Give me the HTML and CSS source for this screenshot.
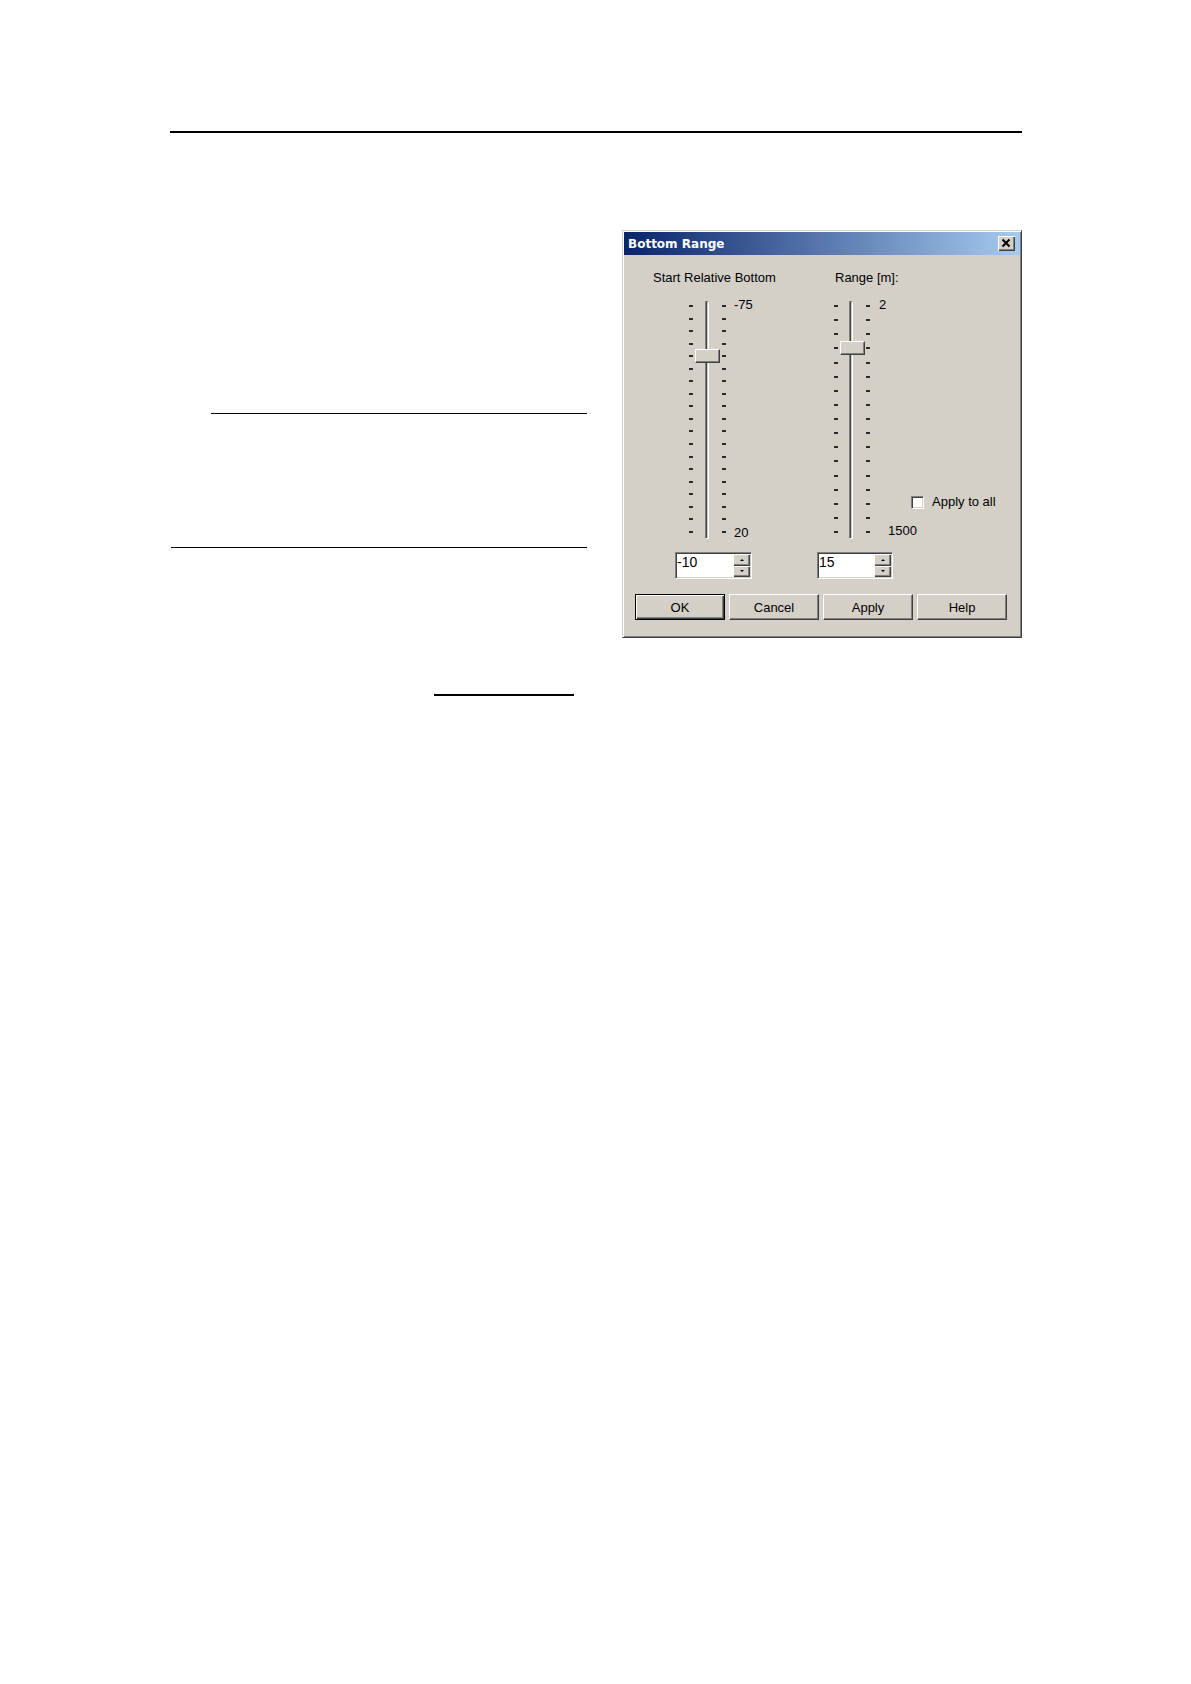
FILE: index.html
```html
<!DOCTYPE html>
<html lang="en">
<head>
<meta charset="utf-8">
<title>Bottom Range</title>
<link rel="stylesheet" href="styles.css">
</head>
<body>
<div class="page">
  <div class="rule-top"></div>
  <div class="content">
    <div class="text-col">
      <div class="rule-a"></div>
      <div class="rule-b"></div>
      <div class="rule-link"></div>
    </div>
    <div class="dialog">
      <div class="titlebar">
        <span class="title">Bottom Range</span>
        <button class="close" type="button" aria-label="Close">
          <svg width="17" height="15" viewBox="0 0 17 15"><path d="M4.5 3.5 L11.5 10.5 M11.5 3.5 L4.5 10.5" stroke="#000" stroke-width="2" fill="none"/></svg>
        </button>
      </div>
      <div class="client">
        <div class="controls">
          <div class="group group-start">
            <div class="hdr">Start Relative Bottom</div>
            <div class="slider slider-start">
              <div class="ticks"><i></i><i></i><i></i><i></i><i></i><i></i><i></i><i></i><i></i><i></i><i></i><i></i><i></i><i></i><i></i><i></i><i></i><i></i><i></i></div>
              <div class="track"><div class="thumb thumb-start"></div></div>
              <div class="ticks"><i></i><i></i><i></i><i></i><i></i><i></i><i></i><i></i><i></i><i></i><i></i><i></i><i></i><i></i><i></i><i></i><i></i><i></i><i></i></div>
              <div class="scale"><span>-75</span><span>20</span></div>
            </div>
            <div class="spin">
              <span class="value">-10</span>
              <span class="arrows"><span class="up"></span><span class="dn"></span></span>
            </div>
          </div>
          <div class="group group-range">
            <div class="hdr">Range [m]:</div>
            <div class="slider slider-range">
              <div class="ticks"><i></i><i></i><i></i><i></i><i></i><i></i><i></i><i></i><i></i><i></i><i></i><i></i><i></i><i></i><i></i><i></i><i></i></div>
              <div class="track"><div class="thumb thumb-range"></div></div>
              <div class="ticks"><i></i><i></i><i></i><i></i><i></i><i></i><i></i><i></i><i></i><i></i><i></i><i></i><i></i><i></i><i></i><i></i><i></i></div>
              <div class="scale"><span>2</span><span class="far">1500</span></div>
            </div>
            <div class="spin">
              <span class="value">15</span>
              <span class="arrows"><span class="up"></span><span class="dn"></span></span>
            </div>
          </div>
          <label class="check"><span class="box"></span><span>Apply to all</span></label>
        </div>
        <div class="buttons">
          <button class="btn btn-default" type="button">OK</button>
          <button class="btn" type="button">Cancel</button>
          <button class="btn" type="button">Apply</button>
          <button class="btn" type="button">Help</button>
        </div>
      </div>
    </div>
  </div>
</div>
</body>
</html>
```

FILE: styles.css
```css
html, body {
  margin: 0;
  background: #fff;
}
body {
  font-family: "Liberation Sans", Arial, sans-serif;
  color: #000;
}
.page {
  width: 1191px;
  padding-top: 131px;
}
.rule-top {
  margin-left: 170px;
  width: 852px;
  height: 2px;
  background: #000;
}
.content {
  display: flex;
  align-items: flex-start;
  margin-top: 97px;
}
.text-col {
  display: flex;
  flex-direction: column;
  margin-left: 171px;
  width: 416px;
}
.rule-a {
  margin-top: 183px;
  margin-left: 40px;
  height: 1px;
  background: #000;
}
.rule-b {
  margin-top: 133px;
  height: 1px;
  background: #000;
}
.rule-link {
  margin-top: 146px;
  margin-left: 263px;
  width: 140px;
  height: 2px;
  background: #000;
}

/* dialog window */
.dialog {
  margin-left: 35px;
  width: 400px;
  height: 408px;
  box-sizing: border-box;
  background: #d4d0c8;
  border: 1px solid;
  border-color: #d4d0c8 #404040 #404040 #d4d0c8;
  padding: 1px;
  box-shadow: inset 1px 1px #fff, inset -1px -1px #808080;
}
.titlebar {
  display: flex;
  align-items: center;
  height: 23px;
  background: linear-gradient(to right, #0a246a, #a6caf0);
}
.title {
  flex: 1;
  padding: 2px 0 0 4px;
  font-family: "DejaVu Sans", Verdana, sans-serif;
  font-weight: bold;
  font-size: 12px;
  line-height: 21px;
  color: #fff;
  white-space: nowrap;
}
.close {
  display: block;
  width: 17px;
  height: 15px;
  margin-right: 5px;
  padding: 0;
  border: 0;
  background: #d4d0c8;
  box-shadow: inset 1px 1px #fff, inset -1px -1px #404040, inset -2px -2px #808080;
}
.close svg {
  display: block;
}

.client {
  font-size: 13px;
}
.controls {
  display: flex;
  align-items: flex-start;
  padding: 15px 0 0 29px;
}
.group {
  display: flex;
  flex-direction: column;
  align-items: flex-start;
}
.group-start {
  width: 182px;
}
.group-range {
  width: 76px;
}
.hdr {
  height: 16px;
  line-height: 16px;
  white-space: nowrap;
}

/* trackbars */
.slider {
  display: flex;
  align-items: flex-start;
  height: 238px;
  margin-top: 15px;
}
.slider-start {
  margin-left: 36px;
}
.slider-range {
  margin-left: -1px;
}
.ticks {
  display: flex;
  flex-direction: column;
  justify-content: space-between;
  width: 4px;
  height: 228px;
  margin-top: 4px;
}
.ticks i {
  display: block;
  width: 4px;
  height: 2px;
  background: #2a2a2a;
}
.track {
  position: relative;
  width: 4px;
  height: 238px;
  box-sizing: border-box;
  border: 1px solid;
  border-color: #808080 #fff #fff #808080;
  background: linear-gradient(to right, #404040 0 1px, #d4d0c8 1px);
}
.slider-start .track {
  margin: 0 13px 0 12px;
}
.slider-range .track {
  margin: 0 13px 0 11px;
}
.thumb {
  position: absolute;
  width: 25px;
  box-sizing: border-box;
  background: #d4d0c8;
  border: 1px solid;
  border-color: #fff #404040 #404040 #fff;
  box-shadow: inset -1px -1px #808080;
}
.thumb-start {
  left: -11px;
  top: 47px;
  height: 14px;
}
.thumb-range {
  left: -10px;
  top: 39px;
  height: 14px;
}
.scale {
  display: flex;
  flex-direction: column;
  justify-content: space-between;
  align-items: flex-start;
  height: 242px;
  margin: -3px 0 0 8px;
  line-height: 14px;
  white-space: nowrap;
}
.slider-range .scale {
  margin-left: 9px;
}
.scale .far {
  margin-left: 9px;
  margin-bottom: 2px;
}

/* spin edit boxes */
.spin {
  display: flex;
  width: 77px;
  height: 27px;
  margin-top: 13px;
  box-sizing: border-box;
  padding: 1px;
  background: #fff;
  border: 1px solid;
  border-color: #808080 #fff #fff #808080;
  box-shadow: inset 1px 1px #404040, inset -1px -1px #d4d0c8;
}
.group-start .spin {
  margin-left: 22px;
}
.group-range .spin {
  margin-left: -18px;
  width: 76px;
}
.value {
  flex: 1;
  font-size: 14px;
  line-height: 17px;
}
.arrows {
  display: flex;
  flex-direction: column;
  width: 17px;
}
.arrows span {
  flex: 1;
  display: flex;
  align-items: center;
  justify-content: center;
  background: #d4d0c8;
  box-shadow: inset 1px 1px #fff, inset -1px -1px #404040, inset -2px -2px #808080;
}
.arrows .up::before {
  content: "";
  border-left: 2px solid transparent;
  border-right: 2px solid transparent;
  border-bottom: 2px solid #000;
}
.arrows .dn::before {
  content: "";
  border-left: 2px solid transparent;
  border-right: 2px solid transparent;
  border-top: 2px solid #000;
}

/* checkbox */
.check {
  display: flex;
  align-items: center;
  gap: 8px;
  height: 16px;
  margin-top: 224px;
  line-height: 16px;
  white-space: nowrap;
}
.box {
  width: 13px;
  height: 13px;
  box-sizing: border-box;
  background: #fff;
  border: 1px solid;
  border-color: #808080 #fff #fff #808080;
  box-shadow: inset 1px 1px #404040, inset -1px -1px #d4d0c8;
}

/* push buttons */
.buttons {
  display: flex;
  gap: 4px;
  margin-top: 15px;
  padding-left: 11px;
}
.btn {
  width: 90px;
  height: 26px;
  box-sizing: border-box;
  padding: 1px 0 0;
  font-family: "Liberation Sans", Arial, sans-serif;
  font-size: 13px;
  line-height: 23px;
  color: #000;
  text-align: center;
  background: #d4d0c8;
  border: 1px solid;
  border-color: #fff #404040 #404040 #fff;
  box-shadow: inset -1px -1px #808080;
}
.btn-default {
  border-color: #000;
  box-shadow: inset 1px 1px #fff, inset -1px -1px #404040, inset -2px -2px #808080;
}
```
